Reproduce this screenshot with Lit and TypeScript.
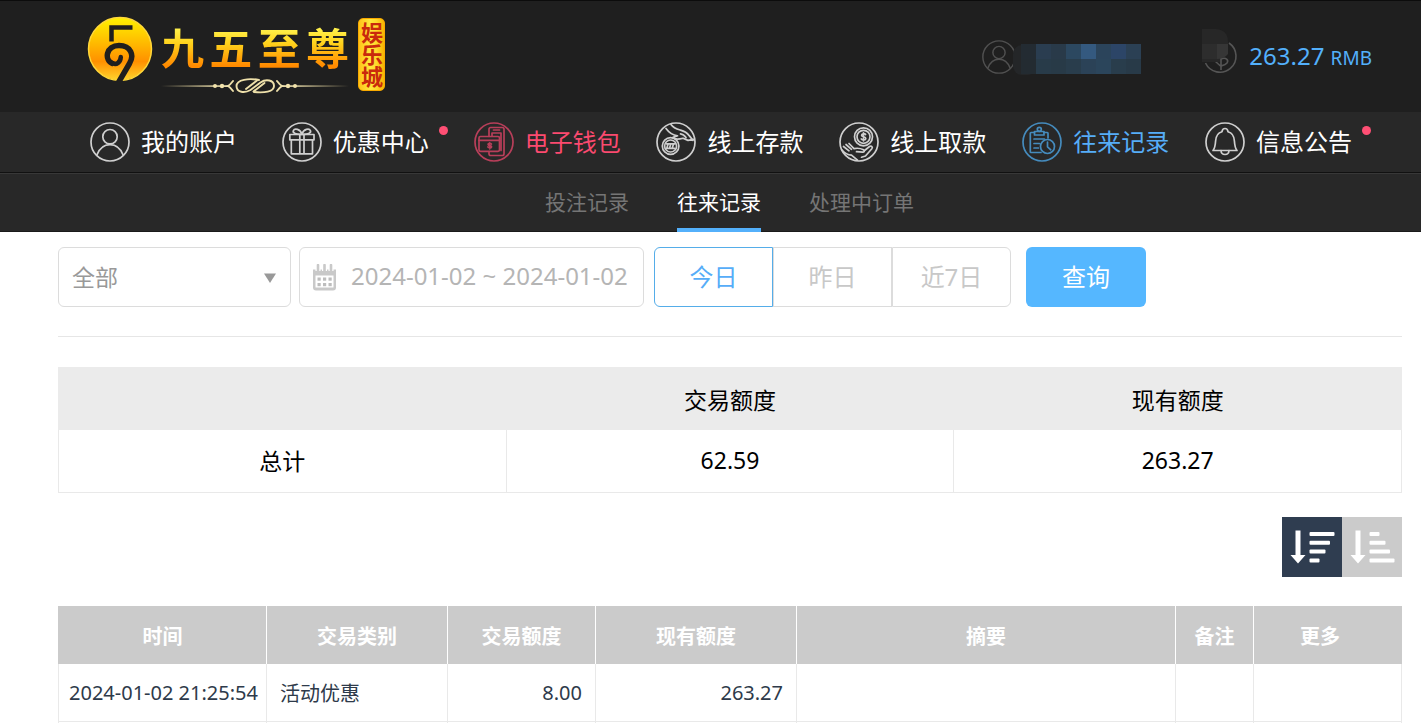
import { LitElement, html, svg, css } from "lit";
import { customElement, property, state } from "lit/decorators.js";
import { classMap } from "lit/directives/class-map.js";

const icons: Record<string, unknown> = {
  user: svg`<circle cx="20" cy="14.700" r="7.200"/><path d="M7 32.800C9.500 26.400 14.200 22.600 20 22.600S30.500 26.400 33 32.800"/>`,
  gift: svg`<path d="M7.800 12.500h24.200v5.300H7.800zM9.300 17.800h21.200v14H9.300zM17.800 12.500v19.300M22 12.500v19.300"/><path d="M19.900 12.300C14 12.500 10.500 11 11.300 8.800c1.200-3 7-2 8.600 3.500 1.600-5.500 7.400-6.500 8.600-3.500.8 2.200-2.700 3.700-8.600 3.500"/>`,
  wallet: svg`<path d="M15 14.300V7.200q0-1.700 1.700-1.700h11.600q1.700 0 1.700 1.700v24.600q0 1.700-1.700 1.700H16.700q-1.700 0-1.700-1.700v-2.300M18 14V11h9v17.500M19.500 8h6"/><rect x="5" y="14.500" width="20.500" height="14.800" rx="1.500"/><path d="M5 18.300h20.500M17.400 22c-.8-1-3.300-.9-3.300.4 0 1.500 3.500.8 3.500 2.300 0 1.400-2.800 1.400-3.700.3M15.700 20.800v6"/>`,
  deposit: svg`<circle cx="14.600" cy="24" r="8.300"/><circle cx="14.600" cy="24" r="6"/><path d="M10.500 21.800h8.500M10.800 26.300l1.200-4M13.500 26.300l1.200-4M16.200 26.300l1.200-4M10.500 26.300h8"/><path d="M10 6.500c3.500 4.800 7 6.800 11.500 7.300-2 1-4.300 1-5 2 3.500 2.200 7.500 1.200 10.500.4l5 2.200 5.500-1M15 2.500c2.500 3.700 6 4.600 9.500 5.600s6.500 2.500 8.500 5.300l4 5M24.500 11.800c2.500.3 4 1.500 5.500 3.700"/>`,
  withdraw: svg`<circle cx="24.500" cy="14.800" r="9"/><circle cx="24.500" cy="14.800" r="6.500"/><path d="M26.600 12.600c-.9-1.300-4-1.200-4 .6 0 2.100 4.200 1.100 4.200 3.300 0 1.900-3.400 1.900-4.500.4M24.500 10.800v8"/><path d="M3 28c2.500 3 5.500 4.800 9.500 5.200l6 5M4.500 24.500l5.500 4.300M7 22.500l5.500 4.800M10 21.500l5 5.100c3-.6 7-.1 9.500 1.100 1.500 1 .8 2.600-1 2.500l-6-.5M25 29l5.500-4.500c2-1 3.600.5 2.300 2.200L26.500 34l-4 1.200"/>`,
  record: svg`<path d="M12.500 10.500H9q-.7 0-.7.700v18.600q0 .7.700.7h10M22 10.500h3.300q.7 0 .7.700V16"/><path d="M12.500 9.500H22v3.500h-9.500z"/><circle cx="17.300" cy="7.300" r="2"/><path d="M12 17h10.500M12 21.500h5.500M12 26h4.500"/><circle cx="25.500" cy="24.500" r="7"/><path d="M25.500 20v4.800l3.300 3"/>`,
  bell: svg`<path d="M8 28.500c2-2.300 2.300-5 2.600-9.500.3-5 2.600-8.300 6.400-9.300.5-4.300 5.500-4.300 6 0 3.800 1 6.100 4.300 6.400 9.300.3 4.500.6 7.200 2.600 9.500z"/><path d="M16 28.500c.3 5.300 7.700 5.300 8 0"/>`,
};

@customElement("ring-icon")
class RingIcon extends LitElement {
  @property() name = "user";

  static styles = css`
    :host { display: block; flex: none; }
    svg { display: block; width: 100%; height: 100%; fill: none; stroke: currentColor; stroke-width: 1.7; stroke-linejoin: round; stroke-linecap: round; }
  `;

  render() {
    return html`<svg viewBox="0 0 40 40" aria-hidden="true"><circle cx="20" cy="20" r="19"/>${icons[this.name]}</svg>`;
  }
}

@customElement("site-logo")
class SiteLogo extends LitElement {
  static styles = css`
    :host { display: flex; align-items: flex-start; font-family: "Noto Sans CJK SC", sans-serif; }
    .emblem { width: 66px; height: 66px; flex: none; }
    .name { margin: 4px 0 0 8px; width: 188px; }
    .title { display: flex; justify-content: space-between; height: 56px; line-height: 52px; font-size: 43px; font-weight: 700; }
    .title span { height: 52px; background: linear-gradient(#fff04a 18%, #ffd21c 45%, #ff8a00 88%); -webkit-background-clip: text; background-clip: text; color: transparent; }
    .line { display: block; width: 100%; height: 18px; }
    .tag { box-sizing: border-box; margin: 2px 0 0 9px; width: 27px; height: 73px; display: flex; align-items: center; justify-content: center; border: 1px solid #f7a900; border-radius: 5px; background: linear-gradient(90deg, #ffc21a, #ffe93c 45%, #ffd92b 70%, #f9b300); color: #c92a0c; font-size: 22px; line-height: 25px; font-weight: 700; }
    .tag span { writing-mode: vertical-rl; }
  `;

  render() {
    return html`
      <svg class="emblem" viewBox="0 0 66 66" aria-hidden="true">
        <defs><linearGradient id="g" x1="0" y1="0" x2="0" y2="1"><stop offset="0" stop-color="#fff200"/><stop offset=".45" stop-color="#ffb400"/><stop offset=".7" stop-color="#ff9000"/><stop offset="1" stop-color="#ffd52e"/></linearGradient></defs>
        <circle cx="33" cy="33" r="31.500" fill="url(#g)" stroke="#ffd83a" stroke-width="1.500"/>
        <path d="M45.500 11.500H24.500V25.500" fill="none" stroke="#201f1e" stroke-width="4.500"/>
        <path d="M26.500 48C16 44 19.500 29.500 32 29.500c12 0 15.500 10 10.500 18L31.500 66.500" fill="none" stroke="#201f1e" stroke-width="5.500"/>
        <path d="M24 46.500c6 3.800 9.500-1 9.800-5.500" fill="none" stroke="#201f1e" stroke-width="4.500" stroke-linecap="round"/>
      </svg>
      <div class="name">
        <div class="title">${["九", "五", "至", "尊"].map((c) => html`<span>${c}</span>`)}</div>
        <svg class="line" viewBox="0 0 188 18" aria-hidden="true">
          <defs>
            <linearGradient id="l" x1="0" x2="1" y1="0" y2="0"><stop offset="0" stop-color="#e5d49a" stop-opacity="0"/><stop offset="1" stop-color="#f4e7b4"/></linearGradient>
            <linearGradient id="r" x1="1" x2="0" y1="0" y2="0"><stop offset="0" stop-color="#e5d49a" stop-opacity="0"/><stop offset="1" stop-color="#f4e7b4"/></linearGradient>
          </defs>
          <rect x="0" y="9.200" width="68" height="1.800" fill="url(#l)"/><rect x="120" y="9.200" width="68" height="1.800" fill="url(#r)"/>
          <g fill="#f2e3ac"><circle cx="54" cy="10" r="2"/><circle cx="61" cy="10" r="2.200"/><circle cx="127" cy="10" r="2.200"/><circle cx="134" cy="10" r="2"/></g>
          <g fill="none" stroke="#eee0aa" stroke-width="1.900" stroke-linecap="round"><path d="M72 5q-3 4-5 5 2 1 5 5M116 5q3 4 5 5-2 1-5 5"/><path d="M98 4C88 2 75.500 3.500 75.500 10s8 7.500 14 4l10-7.500C105 2.500 113 4 113 10s-10 7-20 6"/><path d="M85 13l11-8.500M92.500 15.500l11-8.500"/></g>
        </svg>
      </div>
      <div class="tag"><span>娱乐城</span></div>
    `;
  }
}

const menu = [
  { icon: "user", label: "我的账户", roomy: true },
  { icon: "gift", label: "优惠中心", roomy: true, dot: true },
  { icon: "wallet", label: "电子钱包", tone: "pink" },
  { icon: "deposit", label: "线上存款" },
  { icon: "withdraw", label: "线上取款" },
  { icon: "record", label: "往来记录", tone: "blue" },
  { icon: "bell", label: "信息公告", dot: true },
];

const mosaic = [
  ["#232b32", "#2a3d50", "#293a49", "#2c4860", "#34597f", "#2b445b", "#2c4567", "#2b4054"],
  ["#232b31", "#283b49", "#283a47", "#293d4c", "#2b4257", "#2b455b", "#293d4c", "#283a48"],
];

const records = [
  { time: "2024-01-02 21:25:54", type: "活动优惠", amount: "8.00", balance: "263.27" },
  { time: "", type: "", amount: "", balance: "" },
];

@customElement("app-root")
class AppRoot extends LitElement {
  @state() private range = 0;
  @state() private order = 0;

  static styles = css`
    :host { display: flex; flex-direction: column; height: 100vh; background: #fff; color: #000; font-family: "Noto Sans", "Noto Sans CJK SC", sans-serif; }
    * { box-sizing: border-box; }
    a { color: inherit; text-decoration: none; }
    button, input, select { font: inherit; margin: 0; }
    .top { display: flex; align-items: flex-start; height: 112px; padding: 15px 49px 0 87px; background: #1f1f1f; border-top: 1px solid #0c0c0c; }
    .account { display: flex; align-items: center; margin: 23px 0 0 auto; color: #53b0fb; }
    .account ring-icon { width: 34px; height: 34px; color: #505050; }
    .mask { display: block; width: 130px; height: 32px; margin: 4px 60px 0 -4px; }
    .coin { display: block; width: 36px; height: 46px; margin: -10px 11px 0 0; }
    .sum { font-size: 24px; line-height: 34px; }
    .sum small { font-size: 19px; }
    .menu { display: flex; justify-content: space-between; align-items: center; height: 61px; padding: 0 69px 0 90px; background: #282828; border-bottom: 1px solid #111; color: #fff; font-size: 24px; }
    .entry { display: flex; align-items: center; gap: 11px; position: relative; white-space: nowrap; line-height: 36px; }
    .entry ring-icon { width: 40px; height: 40px; color: #cfcfcf; }
    .roomy { margin-right: 9px; }
    .pink { color: #fb4a6f; }
    .pink ring-icon { color: #b83f5a; }
    .blue { color: #56adf8; }
    .blue ring-icon { color: #458bbd; }
    .dot { position: absolute; top: 4px; right: -19px; width: 9px; height: 9px; border-radius: 50%; background: #ff4f74; }
    .tabs { display: flex; justify-content: center; gap: 48px; height: 59px; padding-left: 38px; background: #282828; border-top: 1px solid #383838; border-bottom: 1px solid #1a1a1a; color: #757575; font-size: 21px; line-height: 56px; }
    .tabs a { height: 58px; }
    .tabs .on { color: #fff; border-bottom: 4px solid #53b0fb; }
    main { flex: 1; min-height: 0; overflow-y: auto; scrollbar-width: none; padding: 15px 19px 0 58px; }
    .filters { display: flex; padding-bottom: 29px; border-bottom: 1px solid #e6e6e6; font-size: 24px; }
    .pick { display: grid; width: 233px; margin-right: 8px; }
    .pick > * { grid-area: 1 / 1; }
    .pick select { appearance: none; height: 60px; padding: 0 13px; border: 1px solid #dcdcdc; border-radius: 6px; background: #fff; color: #999; font-size: 23px; }
    .pick svg { place-self: center end; width: 14px; height: 12px; margin: 2px 14px 0 0; pointer-events: none; }
    .date { display: flex; align-items: center; width: 345px; height: 60px; margin-right: 10px; padding: 0 0 0 12px; border: 1px solid #dcdcdc; border-radius: 6px; }
    .date svg { flex: none; width: 25px; height: 27px; margin-right: 14px; }
    .date input { flex: 1; min-width: 0; height: 56px; padding: 0 0 4px; border: 0; outline: 0; background: none; color: #b5b5b5; }
    .days { display: flex; margin-right: 15px; }
    .days button { width: 119px; height: 60px; padding: 0 0 3px; border: 1px solid #dcdcdc; background: #fff; color: #c8c8c8; }
    .days button:first-child { border-radius: 6px 0 0 6px; }
    .days button:last-child { border-radius: 0 6px 6px 0; }
    .days .on { border-color: #55ade9; color: #56adf8; }
    .query { width: 120px; height: 60px; padding: 0 0 3px; border: 0; border-radius: 6px; background: #55b7ff; color: #fff; }
    table { width: 100%; border-collapse: collapse; table-layout: fixed; }
    .total { margin-top: 30px; font-size: 23px; text-align: center; }
    .total th { height: 62px; padding: 0; background: #ebebeb; border: 1px solid #ebebeb; font-weight: 400; }
    .total td { height: 63px; padding: 0 0 2px; border: 1px solid #e9e9e9; border-top: 0; }
    .sort { display: flex; justify-content: flex-end; margin: 24px 0 29px; }
    .sort button { width: 60px; height: 60px; padding: 0; border: 0; background: #cbcbcb; }
    .sort .on { background: #2f3d50; }
    .sort svg { display: block; width: 60px; height: 60px; }
    .list { font-size: 20px; color: #2e3a4a; }
    .list th { height: 58px; padding: 0; background: #cbcbcb; color: #fff; font-weight: 700; border-right: 1px solid #fff; }
    .list th:first-child { border-left: 1px solid #cbcbcb; }
    .list th:last-child { padding-right: 15px; border-right: 1px solid #cbcbcb; }
    .list td { height: 57px; padding: 0 13px; border: 1px solid #e9e9e9; border-top: 0; white-space: nowrap; }
    .list .time { padding: 0 0 0 10px; }
    .list .num { text-align: right; }
    .c1 { width: 208px; } .c2 { width: 181px; } .c3 { width: 148px; } .c4 { width: 201px; } .c6 { width: 78px; } .c7 { width: 148px; }
  `;

  private bars(widths: number[]) {
    return html`<svg viewBox="0 0 60 60" aria-hidden="true" fill="#fff">
      <path d="M13.500 13.500h5V38h5L16 46.500 8.500 38h5z"/>
      ${widths.map((w, i) => svg`<rect x="27.500" y=${15 + i * 8.8} width=${w} height="4" rx="1"/>`)}
    </svg>`;
  }

  render() {
    return html`
      <header>
        <div class="top">
          <site-logo></site-logo>
          <div class="account">
            <ring-icon name="user"></ring-icon>
            <svg class="mask" viewBox="0 0 130 32" aria-hidden="true">
              <rect x="1" y="2" width="24" height="30" rx="9" fill="#242628"/>
              ${mosaic.map((row, y) => row.map((c, x) => svg`<rect x=${9 + x * 15} y=${1 + y * 15} width="15" height="15" fill=${c}/>`))}
            </svg>
            <svg class="coin" viewBox="0 0 36 46" aria-hidden="true">
              <g fill="none" stroke="#555" stroke-width="1.600"><path d="M27 14a16 16 0 1 1-23.500 20"/><path d="M13 32l6 5.500M19 29v12M19 30c5-2 8 1 6 4-1.500 2-4 2.500-6 3"/></g>
              <path d="M0 0h14q12 1 12 13v10q-2 5-8 5v5H0z" fill="#272727"/><rect y="15" width="15" height="15" fill="#2d2d2d"/><path d="M15 15h11v10q-4 5-11 5z" fill="#363636"/>
            </svg>
            <span class="sum">263.27 <small>RMB</small></span>
          </div>
        </div>
        <nav class="menu">
          ${menu.map((m) => html`<a href="#" class=${classMap({ entry: true, roomy: !!m.roomy, pink: m.tone === "pink", blue: m.tone === "blue" })}>
            <ring-icon name=${m.icon}></ring-icon><span>${m.label}</span>${m.dot ? html`<i class="dot"></i>` : ""}
          </a>`)}
        </nav>
        <nav class="tabs"><a href="#">投注记录</a><a href="#" class="on">往来记录</a><a href="#">处理中订单</a></nav>
      </header>
      <main>
        <div class="filters">
          <div class="pick">
            <select aria-label="交易类别"><option>全部</option></select>
            <svg viewBox="0 0 14 12" aria-hidden="true"><path d="M1 1.500h12L7 11z" fill="#999"/></svg>
          </div>
          <label class="date">
            <svg viewBox="0 0 25 27" aria-hidden="true">
              <path d="M1 5.500h23v18q0 3-3 3H4q-3 0-3-3z" fill="#c9c9c9"/><path d="M3.500 11.500h18v12h-18z" fill="#fff"/>
              <path d="M6 1v6M12.500 1v6M19 1v6" stroke="#fff" stroke-width="5"/><path d="M6 1v6M12.500 1v6M19 1v6" stroke="#c9c9c9" stroke-width="2.600" stroke-linecap="round"/>
              <g fill="#bdbdbd">${[5.5, 11, 16.5].map((x) => [13.5, 19].map((y) => svg`<rect x=${x} y=${y} width="3.200" height="3.200"/>`))}</g>
            </svg>
            <input type="text" aria-label="时间" .value=${"2024-01-02 ~ 2024-01-02"}>
          </label>
          <div class="days">
            ${["今日", "昨日", "近7日"].map((d, i) => html`<button type="button" class=${classMap({ on: this.range === i })} @click=${() => (this.range = i)}>${d}</button>`)}
          </div>
          <button type="button" class="query">查询</button>
        </div>
        <table class="total">
          <thead><tr><th></th><th>交易额度</th><th>现有额度</th></tr></thead>
          <tbody><tr><td>总计</td><td>62.59</td><td>263.27</td></tr></tbody>
        </table>
        <div class="sort">
          ${[[25, 20.5, 16, 10], [10, 16, 20.5, 25]].map((w, i) => html`<button type="button" aria-label=${i ? "升序" : "降序"} class=${classMap({ on: this.order === i })} @click=${() => (this.order = i)}>${this.bars(w)}</button>`)}
        </div>
        <table class="list">
          <colgroup><col class="c1"><col class="c2"><col class="c3"><col class="c4"><col><col class="c6"><col class="c7"></colgroup>
          <thead><tr>${["时间", "交易类别", "交易额度", "现有额度", "摘要", "备注", "更多"].map((h) => html`<th>${h}</th>`)}</tr></thead>
          <tbody>
            ${records.map((r) => html`<tr><td class="time">${r.time}</td><td>${r.type}</td><td class="num">${r.amount}</td><td class="num">${r.balance}</td><td></td><td></td><td></td></tr>`)}
          </tbody>
        </table>
      </main>
    `;
  }
}
